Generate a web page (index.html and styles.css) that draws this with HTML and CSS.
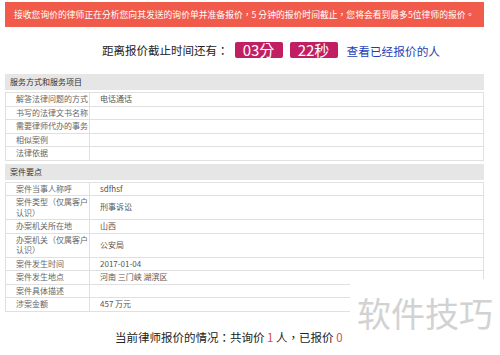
FILE: index.html
```html
<!DOCTYPE html>
<html>
	<head>
		<meta charset="UTF-8">
		<title>询价详情</title>
		<link rel="stylesheet" href="styles.css">
	</head>
	<body>
		<div id="page">
			<div class="notice">接收您询价的律师正在分析您向其发送的询价单并准备报价，5 分钟的报价时间截止，您将会看到最多5位律师的报价。</div>

			<div class="countdown">
				<span class="cd-label">距离报价截止时间还有：</span>
				<span class="cd-box">03分</span>
				<span class="cd-box">22秒</span>
				<a class="cd-link" href="#">查看已经报价的人</a>
			</div>

			<div class="sec-title">服务方式和服务项目</div>
			<table class="info">
				<tr><td class="k">解答法律问题的方式</td><td class="v">电话通话</td></tr>
				<tr><td class="k">书写的法律文书名称</td><td class="v"></td></tr>
				<tr><td class="k">需要律师代办的事务</td><td class="v"></td></tr>
				<tr><td class="k">相似案例</td><td class="v"></td></tr>
				<tr><td class="k">法律依据</td><td class="v"></td></tr>
			</table>

			<div class="sec-title">案件要点</div>
			<table class="info">
				<tr><td class="k">案件当事人称呼</td><td class="v">sdfhsf</td></tr>
				<tr><td class="k">案件类型（仅属客户认识）</td><td class="v">刑事诉讼</td></tr>
				<tr><td class="k">办案机关所在地</td><td class="v">山西</td></tr>
				<tr><td class="k">办案机关（仅属客户认识）</td><td class="v">公安局</td></tr>
				<tr><td class="k">案件发生时间</td><td class="v">2017-01-04</td></tr>
				<tr><td class="k">案件发生地点</td><td class="v">河南 三门峡 湖滨区</td></tr>
				<tr><td class="k">案件具体描述</td><td class="v"></td></tr>
				<tr><td class="k">涉案金额</td><td class="v">457 万元</td></tr>
			</table>

			<p class="summary">当前律师报价的情况：共询价 <em>1</em> 人，已报价 <em>0</em></p>

			<div class="watermark">软件技巧</div>
		</div>
	</body>
</html>
```

FILE: styles.css
```css
* {
	margin: 0;
	padding: 0;
	border: none;
}
body {
	font-family: "Noto Sans CJK SC", "Noto Sans", sans-serif;
	color: #555;
	background: #fff;
}

#page {
	width: 479px;
	margin-left: 5px;
	padding-top: 2px;
	height: 353px;
	position: relative;
}

/* 顶部提示条 */
.notice {
	height: 25px;
	line-height: 25px;
	padding-left: 9px;
	background: #f15b4b;
	color: #fff;
	font-family: "Noto Sans CJK TC", sans-serif;
	font-size: 8.8px;
	white-space: nowrap;
	overflow: hidden;
}

/* 倒计时 */
.countdown {
	display: flex;
	align-items: center;
	height: 16px;
	margin: 15px 0 16px;
	padding-left: 97px;
	font-family: "Noto Sans CJK TC", sans-serif;
}
.cd-label {
	font-size: 11.5px;
	color: #222;
	margin-right: 6px;
}
.cd-box {
	width: 48px;
	height: 16px;
	line-height: 16px;
	text-align: center;
	font-size: 15px;
	color: #fff;
	background: #c21f63;
	border-radius: 2px;
	margin-right: 7px;
}
.cd-link {
	margin-left: 2px;
	font-size: 11.7px;
	color: #1f3fb5;
	text-decoration: none;
}

/* 分组标题 + 表格 */
.sec-title {
	height: 16px;
	line-height: 16px;
	padding-left: 5px;
	background: #e6e6e6;
	font-size: 8px;
	color: #333;
	margin-bottom: 2px;
}

.info {
	width: 100%;
	border-collapse: collapse;
	margin-bottom: 3px;
	font-size: 8px;
}
.info td {
	border: 1px solid #e0e0e0;
	line-height: 10.5px;
	padding: 1px 0;
	vertical-align: middle;
}
.info .k {
	width: 73px;
	padding-left: 10px;
	color: #666;
}
.info .v {
	padding-left: 10px;
	color: #555;
}

.summary {
	margin-top: 17px;
	padding-left: 110px;
	font-family: "Noto Sans CJK TC", sans-serif;
	font-size: 11.5px;
	line-height: 16px;
	color: #222;
}
.summary em {
	font-style: normal;
	color: #e0484c;
}

/* 水印 */
.watermark {
	position: absolute;
	left: 345px;
	top: 279px;
	right: -16px;
	bottom: 0;
	background: #fff;
	padding: 14px 0 0 7px;
	font-size: 34px;
	line-height: 40px;
	color: #d2d2d2;
	white-space: nowrap;
}
```
